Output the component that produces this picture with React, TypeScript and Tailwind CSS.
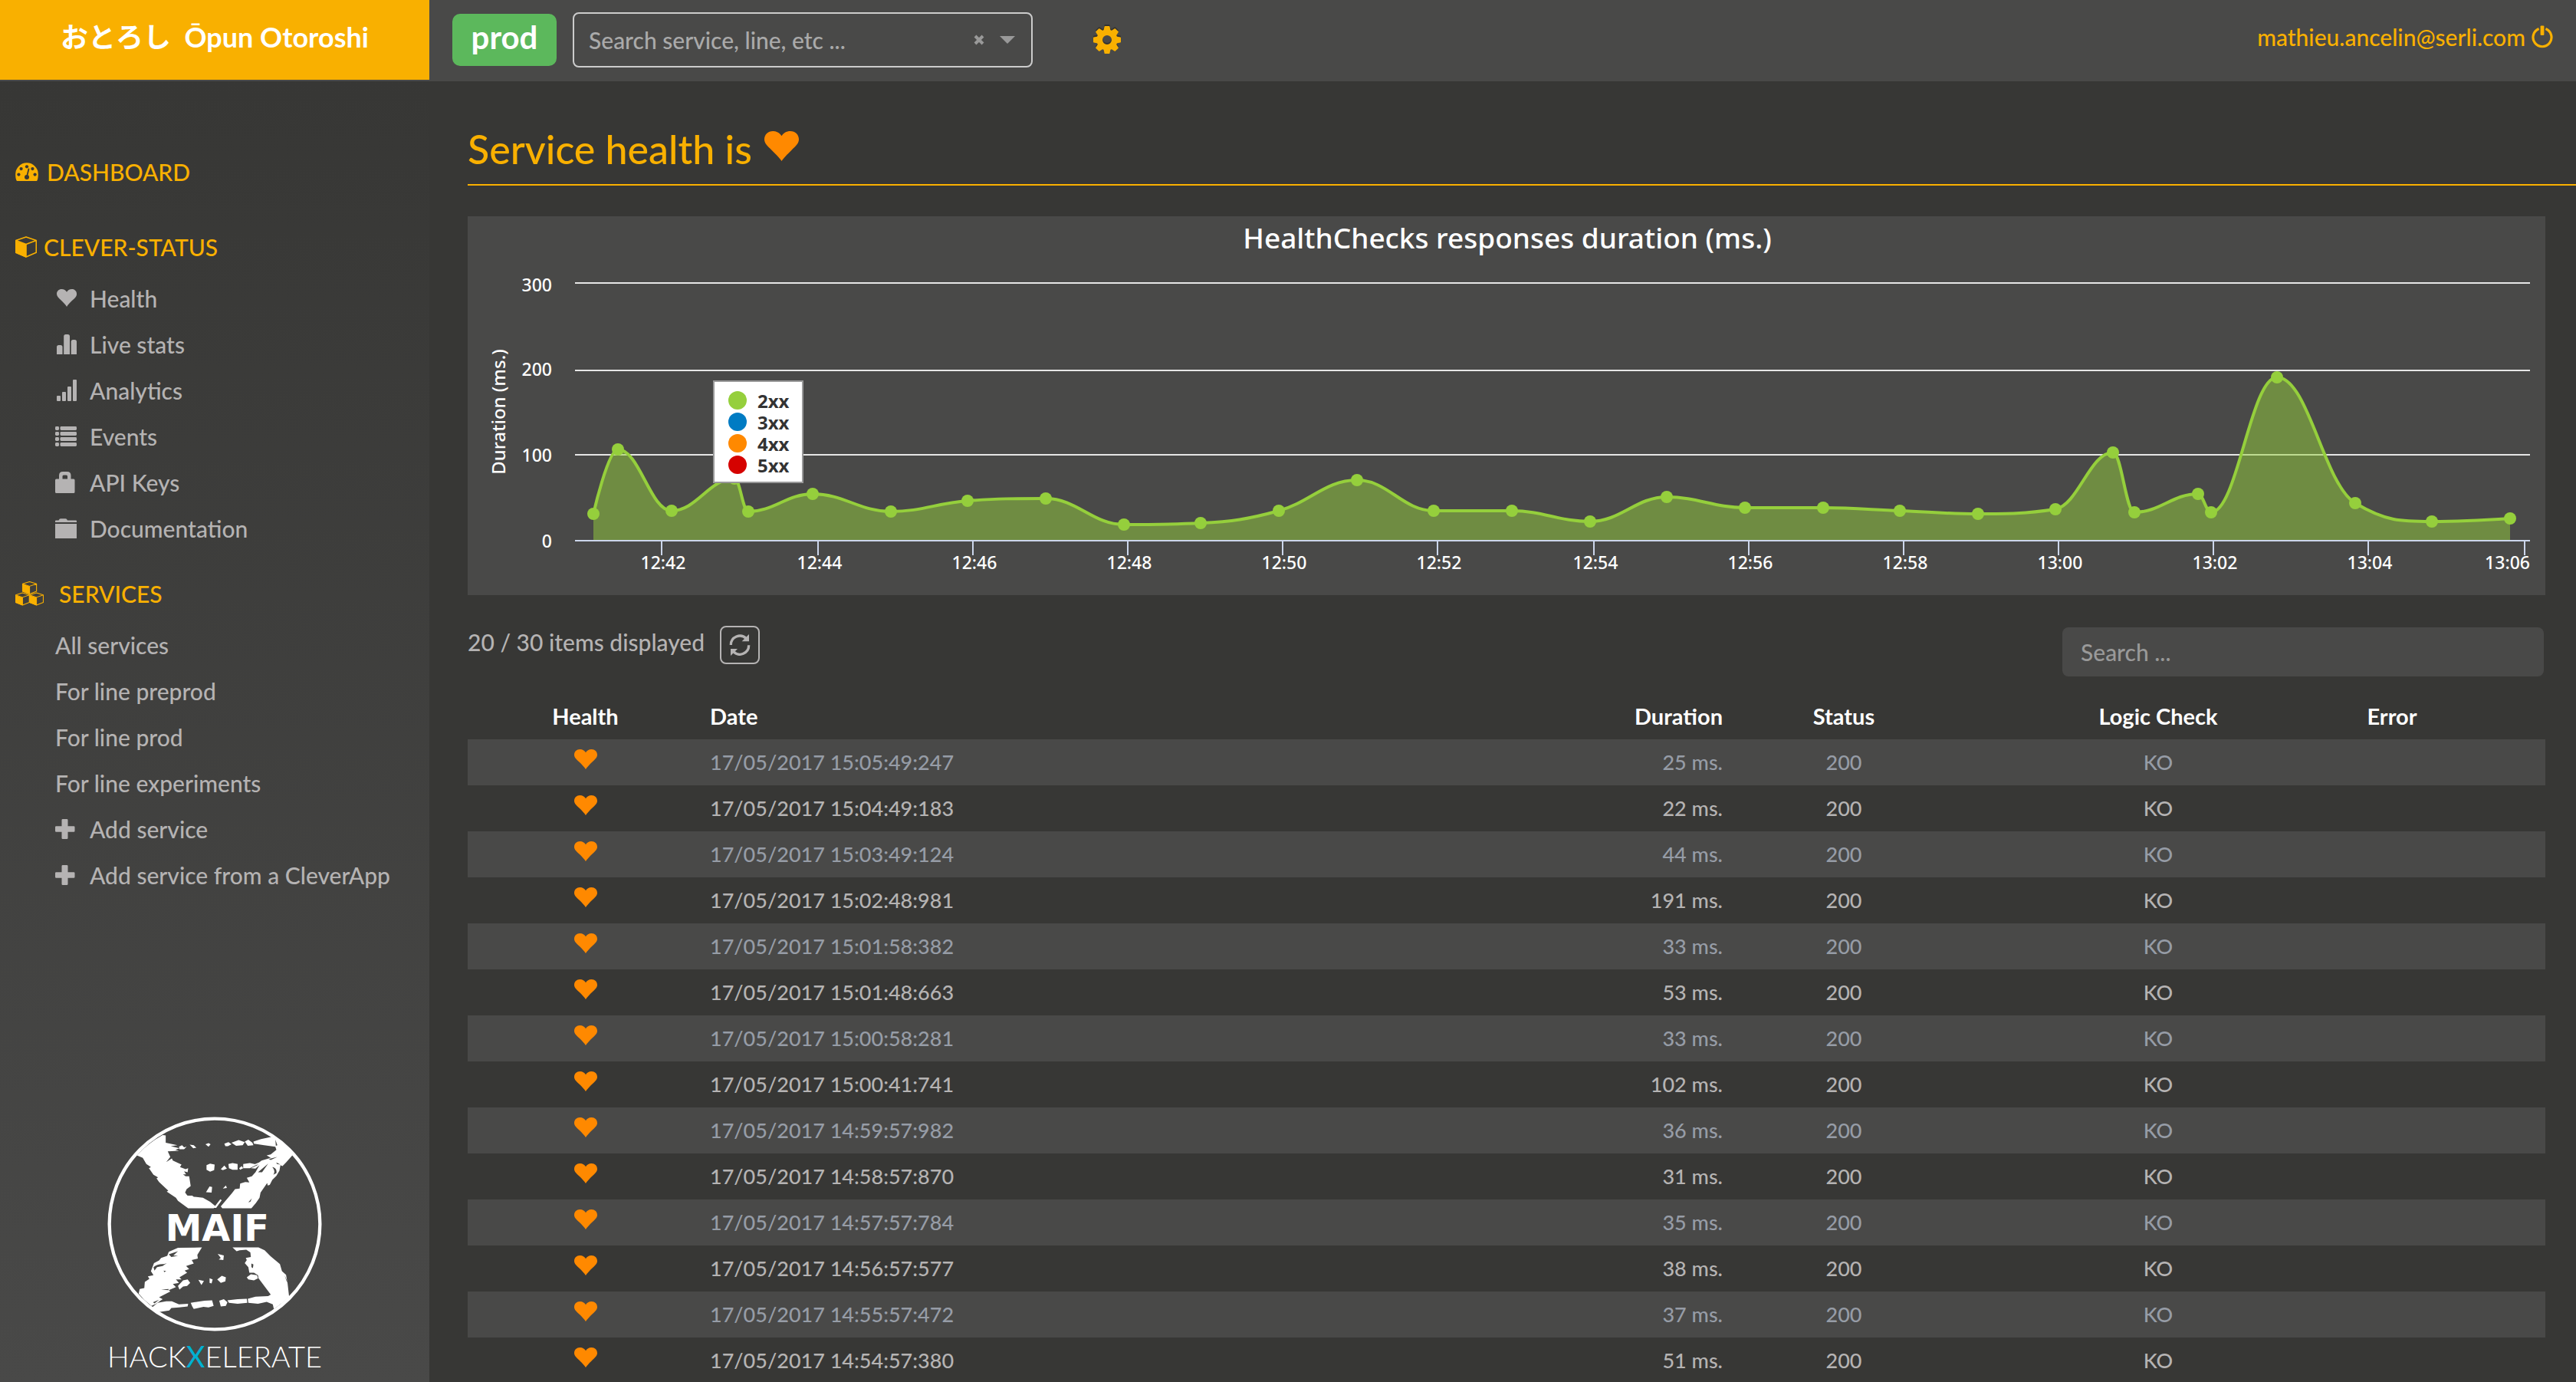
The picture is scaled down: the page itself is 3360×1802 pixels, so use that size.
import type { ReactNode } from "react";

const HEART =
  "M15 26C13.6 23.8 10 20 6.5 16.6C2.5 12.8 0 10.5 0 7.2C0 3 3.2 0 7.4 0C11 0 13.5 1.8 15 4.2C16.5 1.8 19 0 22.6 0C26.8 0 30 3 30 7.2C30 10.5 27.5 12.8 23.5 16.6C20 20 16.4 23.8 15 26Z";

function Heart({ className }: { className: string }) {
  return (
    <svg viewBox="0 0 30 26" className={className} fill="currentColor" aria-hidden="true">
      <path d={HEART} />
    </svg>
  );
}

function Glyph({ children }: { children: ReactNode }) {
  return (
    <svg viewBox="0 0 28 28" className="size-7 shrink-0" fill="currentColor" aria-hidden="true">
      {children}
    </svg>
  );
}

const healthGlyph = (
  <Glyph>
    <path transform="translate(2 2) scale(0.87 0.88)" d={HEART} />
  </Glyph>
);
const statsGlyph = (
  <Glyph>
    <path d="M2 27V17.5Q2 15 4.5 15H7Q9.5 15 9.5 17.5V27ZM11.2 27V3.5Q11.2 1 13.7 1H16.5Q19 1 19 3.5V27ZM20.7 27V10.5Q20.7 8 23.2 8H25.5Q28 8 28 10.5V27Z" />
  </Glyph>
);
const signalGlyph = (
  <Glyph>
    <rect x="2" y="21" width="5" height="7" rx="1" />
    <rect x="9" y="16" width="5" height="12" rx="1" />
    <rect x="16" y="9" width="5" height="19" rx="1" />
    <rect x="23" y="0" width="5" height="28" rx="1" />
  </Glyph>
);
const listGlyph = (
  <Glyph>
    {[1, 8, 15, 22].map((y) => (
      <g key={y}>
        <rect x="0" y={y} width="5" height="5" rx="1.4" />
        <rect x="6.5" y={y} width="21.5" height="5" rx="1.4" />
      </g>
    ))}
  </Glyph>
);
const lockGlyph = (
  <Glyph>
    <path
      fillRule="evenodd"
      d="M1.5 9.5H5V5Q5 0 10 0H15.5Q20.5 0 20.5 5V9.5H24Q25.5 9.5 25.5 11V26.5Q25.5 28 24 28H1.5Q0 28 0 26.5V11Q0 9.5 1.5 9.5ZM9.5 9.5H16V6Q16 4.5 14.5 4.5H11Q9.5 4.5 9.5 6Z"
    />
  </Glyph>
);
const folderGlyph = (
  <Glyph>
    <path d="M0 6V4.2Q0 3.5 1 3.5H4.5Q5.5 1.2 7 1.2H13.5Q15 1.2 16 3.5H27Q28 3.5 28 4.2V6ZM0 8H28V27H0Z" />
  </Glyph>
);
const plusGlyph = (
  <Glyph>
    <path d="M9.8 1H15.2Q16.5 1 16.5 2.3V10.3H24.2Q25.5 10.3 25.5 11.6V16.4Q25.5 17.7 24.2 17.7H16.5V25.7Q16.5 27 15.2 27H9.8Q8.5 27 8.5 25.7V17.7H1.3Q0 17.7 0 16.4V11.6Q0 10.3 1.3 10.3H8.5V2.3Q8.5 1 9.8 1Z" />
  </Glyph>
);

function DashboardIcon() {
  return (
    <svg viewBox="56 95 84 68" className="h-6 w-[30px]" aria-hidden="true">
      <path fill="currentColor" d="M61 163C57 156 56 148 56 138A42 42 0 0 1 140 138C140 148 139 156 135 163Z" />
      <g className="fill-[#383836] stroke-[#383836]" strokeWidth="0">
        <circle cx="68" cy="139" r="6" />
        <circle cx="77" cy="118" r="6" />
        <circle cx="98" cy="110" r="6" />
        <circle cx="119" cy="118" r="6" />
        <circle cx="128" cy="139" r="6" />
        <circle cx="98" cy="149" r="8.5" />
        <path d="M98 147L105 119" strokeWidth="5" strokeLinecap="round" />
      </g>
    </svg>
  );
}

function CubeShape() {
  return (
    <>
      <path d="M39 2L76 15V59L39 75L2 59V15Z M2 15L39 29L76 15" fill="none" stroke="currentColor" strokeWidth="4.5" strokeLinejoin="round" />
      <path d="M0 16L39 29V77L0 60Z" fill="currentColor" />
      <path d="M39 29V75" stroke="currentColor" strokeWidth="4.5" />
    </>
  );
}

function CubeIcon() {
  return (
    <svg viewBox="0 0 78 77" className="size-7" aria-hidden="true">
      <CubeShape />
    </svg>
  );
}

function CubesIcon() {
  return (
    <svg viewBox="0 0 37 32" className="h-8 w-[37px]" aria-hidden="true">
      <g transform="translate(9 0) scale(0.245 0.22)">
        <CubeShape />
      </g>
      <g transform="translate(0 14.5) scale(0.24 0.22)">
        <CubeShape />
      </g>
      <g transform="translate(18.2 14.5) scale(0.24 0.22)">
        <CubeShape />
      </g>
    </svg>
  );
}

function CogIcon() {
  return (
    <svg viewBox="-18 -18 36 36" className="size-9 drop-shadow-[0_-2px_0_#333331]" aria-hidden="true">
      <circle r="9.8" fill="none" stroke="currentColor" strokeWidth="7.6" />
      {[0, 45, 90, 135, 180, 225, 270, 315].map((angle) => (
        <path key={angle} transform={`rotate(${angle})`} d="M-4.6 -12L-3.4 -17.4Q-3.2 -18 -2.6 -18H2.6Q3.2 -18 3.4 -17.4L4.6 -12Z" fill="currentColor" />
      ))}
    </svg>
  );
}

function PowerIcon() {
  return (
    <svg viewBox="0 0 28 30" className="h-[30px] w-7" aria-hidden="true">
      <path d="M9.6 4.6A12 12 0 1 0 18.4 4.6" fill="none" stroke="currentColor" strokeWidth="3.2" />
      <rect x="11.6" y="0.5" width="4.8" height="12.5" rx="1" fill="currentColor" />
    </svg>
  );
}

function RefreshIcon() {
  return (
    <svg viewBox="156 113 84 84" className="size-7" aria-hidden="true">
      <path d="M163 155A35 35 0 0 1 223 130M233 156A35 35 0 0 1 173 181" fill="none" stroke="currentColor" strokeWidth="10" />
      <path d="M234 113V141H206ZM162 197V170H189Z" fill="currentColor" />
    </svg>
  );
}

function MaifLogo() {
  return (
    <svg viewBox="60 78 840 842" className="size-[280px]" role="img" aria-label="MAIF">
      <circle cx="480" cy="499" r="413" fill="none" stroke="#fff" strokeWidth="13" />
      <g fill="#fff">
        <path d="M175 230Q218 182 276 150L288 152L288 180L334 190L308 194L342 202L326 208L340 212L296 214L306 236L290 256L312 242L316 250L350 266L344 276L366 284L376 280L374 296L360 292L368 304L356 304L366 312L380 312L386 350L370 362L364 376L374 388L392 388L398 392L434 396L462 412L484 430L476 437H376L336 408L328 396L292 372L298 368L262 334L252 320L258 316L240 306L222 280L230 276L212 264L198 240Z" />
        <path d="M510 437L504 430L548 378L560 362L578 360L580 340L600 334L616 336L606 318L626 312L640 296L656 268L640 282L622 280L652 266L628 268L654 258L664 250L700 240L684 230L700 226L722 208L718 196L674 190L634 184L632 176L662 166L708 156L734 170L786 228L760 258L746 272L738 268L734 290L722 310L706 326L696 346L688 348L686 338L660 376L656 396L642 416L624 437Z" />
        <path d="M476 436L502 402L508 406L486 436Z" />
        <path d="M340 196L352 190L360 198L370 196L360 206L342 206ZM382 188L398 190L408 200L396 202ZM444 186L456 182L464 186L456 196ZM518 184L534 178L546 186L532 194L522 194ZM546 180L574 170L598 178L590 190L564 192ZM598 176L612 168L628 180L632 190L610 192Z" />
        <path d="M448 268L462 262L480 266L478 288L462 294L448 286ZM504 284L518 270L528 282L512 288ZM534 264L550 260L570 264L570 286L550 286L536 280ZM592 264L618 260L646 266L618 280L592 280ZM576 280L586 272L592 280L580 286ZM446 374L460 352L470 354L468 376ZM512 360L524 348L528 358Z" />
        <path d="M336 592L430 591L412 620L414 634L390 640L398 654L368 664L380 676L362 682L372 690L342 708L350 716L328 716L340 730L316 734L328 746L300 758L306 764L262 786L276 794L250 812L232 820Q204 800 182 772L186 754L204 750L206 726L224 714L218 704L240 700L230 684L242 652L262 642L270 632L294 624L300 608Z" />
        <path d="M550 591H652L676 602L700 626L736 656L744 684L760 698L766 732L772 784Q748 808 712 832L708 814L684 804L650 812L612 808L610 792L640 784L690 782L700 776L652 712L650 700L634 690L616 690L612 668L598 652L606 640L602 632L622 628L620 610L604 600L578 602L566 606Z" />
        <path d="M492 616L516 622L514 640L496 638L504 632ZM606 708L622 696L646 700L650 712L634 720L612 716ZM490 716L508 702L524 708L522 724L504 730ZM416 718L438 722L428 738ZM460 712L472 716L468 732L460 730ZM336 742L356 720L374 716L384 730L372 742L356 744L342 756Z" />
        <path d="M232 828L256 808L290 802L312 802L340 814L376 812L374 822L340 826L310 828L302 838L262 844ZM250 836L262 822L256 838ZM386 808L410 804L440 800L470 798L476 820L456 826L436 824L398 832L392 822ZM498 800L516 794L530 806L524 820L504 822ZM530 798L570 794L606 792L608 808L570 812L536 808Z" />
      </g>
      <g className="fill-[#484846]">
        <path d="M366 376L374 386L390 390L372 386ZM490 432L510 404L514 410L496 436ZM706 276Q726 280 722 300L710 306Q720 292 706 276ZM650 296L690 262L666 296ZM612 414L626 398L620 412ZM718 168L726 190L720 192ZM692 244L726 236L700 248ZM722 258L738 266L724 264Z" />
        <path d="M240 668Q256 654 282 656L292 652L276 664L254 668L244 682ZM300 618L336 606L318 622L336 624L310 628ZM624 654L632 658L630 672L624 668ZM280 682L290 684L282 688ZM238 806L262 796L244 810ZM270 756L300 754L298 758ZM754 700L768 730L762 722Z" />
      </g>
      <text x="490" y="564" textAnchor="middle" fill="#fff" className="font-['DejaVu_Sans'] text-[144px] font-bold">
        MAIF
      </text>
    </svg>
  );
}

type Item = { label: string; icon?: ReactNode };

const SERVICE_ITEMS: Item[] = [
  { label: "Health", icon: healthGlyph },
  { label: "Live stats", icon: statsGlyph },
  { label: "Analytics", icon: signalGlyph },
  { label: "Events", icon: listGlyph },
  { label: "API Keys", icon: lockGlyph },
  { label: "Documentation", icon: folderGlyph },
];

const SERVICES_ITEMS: Item[] = [
  { label: "All services" },
  { label: "For line preprod" },
  { label: "For line prod" },
  { label: "For line experiments" },
  { label: "Add service", icon: plusGlyph },
  { label: "Add service from a CleverApp", icon: plusGlyph },
];

function NavList({ items }: { items: Item[] }) {
  return (
    <ul className="mt-[7px] pl-[72px] text-[30px] leading-[60px] text-[#b5b3b3]">
      {items.map((item) => (
        <li key={item.label}>
          <a href="#" className="flex items-center gap-[17px] whitespace-nowrap">
            {item.icon}
            {item.label}
          </a>
        </li>
      ))}
    </ul>
  );
}

function Sidebar() {
  return (
    <aside className="flex w-[560px] shrink-0 flex-col bg-linear-to-b from-[#373735] to-[#494948] pt-[88px]">
      <nav>
        <h2 className="pl-5 text-[30px] leading-[60px] text-[#f9b000]">
          <a href="#" className="flex items-center gap-[11px]">
            <DashboardIcon />
            DASHBOARD
          </a>
        </h2>
        <h2 className="mt-[38px] flex items-center gap-[9px] pl-5 text-[30px] leading-[60px] text-[#f9b000]">
          <CubeIcon />
          CLEVER-STATUS
        </h2>
        <NavList items={SERVICE_ITEMS} />
        <h2 className="mt-[25px] flex items-center gap-5 pl-5 text-[30px] leading-[60px] text-[#f9b000]">
          <CubesIcon />
          SERVICES
        </h2>
        <NavList items={SERVICES_ITEMS} />
      </nav>
      <div className="mt-auto flex flex-col items-center gap-2 pb-[10px]">
        <MaifLogo />
        <p className="text-[38px] leading-[48px] font-light text-white">
          HACK<span className="font-normal text-[#00b1d2]">X</span>ELERATE
        </p>
      </div>
    </aside>
  );
}

function Header() {
  return (
    <header className="flex h-[106px] shrink-0 bg-[#494948]">
      <a
        href="#"
        className="flex h-[104px] w-[560px] shrink-0 items-center justify-center bg-[#f9b000] pb-2 font-[Lato,'Noto_Sans_CJK_JP',sans-serif] text-[36px] font-bold whitespace-pre text-white"
      >
        {"おとろし  Ōpun Otoroshi"}
      </a>
      <div className="flex h-[104px] flex-1 items-center pr-[30px] pl-[30px]">
        <span className="flex h-[68px] w-[136px] items-center justify-center rounded-[10px] bg-[#5cb85c] pb-2 text-[42px] font-bold text-white">
          prod
        </span>
        <div className="ml-[21px] flex h-[72px] w-[600px] items-center rounded-lg border-2 border-[#ccc] pr-[21px] pl-[19px]">
          <input
            type="text"
            role="combobox"
            aria-expanded="false"
            aria-controls="service-options"
            aria-label="Search service"
            placeholder="Search service, line, etc ..."
            className="min-w-0 flex-1 bg-transparent text-[30px] text-white outline-none placeholder:text-[#aaa]"
          />
          <button type="button" aria-label="Clear" className="text-[#999]">
            <svg viewBox="0 0 14 14" className="size-[14px]" aria-hidden="true">
              <path d="M2 2L12 12M12 2L2 12" stroke="currentColor" strokeWidth="4" />
            </svg>
          </button>
          <button type="button" aria-label="Open the list" className="ml-5 text-[#999]">
            <svg viewBox="0 0 20 10" className="h-[10px] w-5" fill="currentColor" aria-hidden="true">
              <path d="M0 0H20L10 10Z" />
            </svg>
          </button>
        </div>
        <button type="button" aria-label="Settings" className="ml-[79px] text-[#f9b000]">
          <CogIcon />
        </button>
        <a href="#" className="ml-auto flex items-center gap-2 pb-2 text-[30px] text-[#f9b000]">
          mathieu.ancelin@serli.com
          <PowerIcon />
        </a>
      </div>
    </header>
  );
}

const POINTS: [number, number][] = [
  [164, 388], [196, 304], [266, 384], [348, 342], [366, 385], [450, 362], [552, 385], [652, 371],
  [754, 368], [856, 402], [956, 400], [1058, 384], [1160, 344], [1260, 384], [1362, 384], [1464, 398],
  [1564, 366], [1666, 380], [1768, 380], [1868, 384], [1970, 388], [2071, 382], [2146, 308], [2174, 386],
  [2257, 362], [2274, 386], [2360, 210], [2462, 374], [2562, 398], [2664, 394],
];

// Smoothed line through the points that never overshoots a neighbour's height.
function splinePath(points: [number, number][]): string {
  let d = `M${points[0][0]} ${points[0][1]}`;
  let rightX = points[0][0];
  let rightY = points[0][1];
  for (let i = 1; i < points.length; i++) {
    const [x, y] = points[i];
    let leftX = x;
    let leftY = y;
    let nextRightX = x;
    let nextRightY = y;
    if (i < points.length - 1) {
      const [lastX, lastY] = points[i - 1];
      const [nextX, nextY] = points[i + 1];
      leftX = (1.5 * x + lastX) / 2.5;
      leftY = (1.5 * y + lastY) / 2.5;
      nextRightX = (1.5 * x + nextX) / 2.5;
      nextRightY = (1.5 * y + nextY) / 2.5;
      const correction = ((nextRightY - leftY) * (nextRightX - x)) / (nextRightX - leftX) + y - nextRightY;
      leftY += correction;
      nextRightY += correction;
      if (leftY > lastY && leftY > y) {
        leftY = Math.max(lastY, y);
        nextRightY = 2 * y - leftY;
      } else if (leftY < lastY && leftY < y) {
        leftY = Math.min(lastY, y);
        nextRightY = 2 * y - leftY;
      }
      if (nextRightY > nextY && nextRightY > y) {
        nextRightY = Math.max(nextY, y);
        leftY = 2 * y - nextRightY;
      } else if (nextRightY < nextY && nextRightY < y) {
        nextRightY = Math.min(nextY, y);
        leftY = 2 * y - nextRightY;
      }
    }
    d += `C${rightX} ${rightY} ${leftX} ${leftY} ${x} ${y}`;
    rightX = nextRightX;
    rightY = nextRightY;
  }
  return d;
}

const LINE = splinePath(POINTS);
const TIMES: [string, number][] = [
  ["12:42", 253], ["12:44", 457], ["12:46", 659], ["12:48", 861], ["12:50", 1063], ["12:52", 1265],
  ["12:54", 1469], ["12:56", 1671], ["12:58", 1873], ["13:00", 2075], ["13:02", 2277], ["13:04", 2479], ["13:06", 2683],
];
const LEVELS: [string, number, number][] = [["300", 87, 98], ["200", 201, 208], ["100", 311, 320], ["0", 423, 432]];
const LEGEND = [
  { label: "2xx", dot: "fill-[#95cf3c]" },
  { label: "3xx", dot: "fill-[#007bc3]" },
  { label: "4xx", dot: "fill-[#ff8900]" },
  { label: "5xx", dot: "fill-[#d50200]" },
];

function DurationChart() {
  return (
    <svg
      viewBox="0 0 2710 494"
      className="mt-10 block h-auto w-full bg-[#494948] font-['Noto_Sans',sans-serif]"
      role="img"
      aria-label="HealthChecks responses duration"
    >
      <text x="1356" y="42" textAnchor="middle" fill="#fff" className="text-[37px]">
        HealthChecks responses duration (ms.)
      </text>
      {LEVELS.map(([label, y, baseline]) => (
        <g key={label}>
          <text x="110" y={baseline} textAnchor="end" fill="#fff" className="text-[23px]">
            {label}
          </text>
          {label !== "0" && <path d={`M140 ${y}H2690`} className="stroke-[#e6e6e6]" strokeWidth="2" />}
        </g>
      ))}
      <text transform="translate(49 255) rotate(-90)" textAnchor="middle" fill="#fff" className="text-[24px]">
        Duration (ms.)
      </text>
      <path d={`${LINE}L2664 423H164Z`} className="fill-[#95cf3c]/50" />
      <path d="M140 423H2690" className="stroke-[#ccd6eb]" strokeWidth="2" />
      {TIMES.map(([label, x], i) => (
        <g key={label}>
          <path d={`M${x} 423V442`} className="stroke-[#ccd6eb]" strokeWidth="2" />
          <text x={i === TIMES.length - 1 ? 2690 : x + 2} y="460" textAnchor={i === TIMES.length - 1 ? "end" : "middle"} fill="#fff" className="text-[23px]">
            {label}
          </text>
        </g>
      ))}
      <path d={LINE} fill="none" className="stroke-[#95cf3c]" strokeWidth="4" strokeLinejoin="round" />
      {POINTS.map(([x, y]) => (
        <circle key={x} cx={x} cy={y} r="8" className="fill-[#95cf3c]" />
      ))}
      <rect x="321" y="215" width="116" height="132" fill="#fff" className="stroke-[#999]" strokeWidth="2" />
      {LEGEND.map(({ label, dot }, i) => (
        <g key={label}>
          <circle cx="352" cy={240 + i * 28} r="12" className={dot} />
          <text x="378" y={250 + i * 28} className="fill-[#333] text-[24px] font-bold">
            {label}
          </text>
        </g>
      ))}
    </svg>
  );
}

const ROWS: [string, number][] = [
  ["17/05/2017 15:05:49:247", 25],
  ["17/05/2017 15:04:49:183", 22],
  ["17/05/2017 15:03:49:124", 44],
  ["17/05/2017 15:02:48:981", 191],
  ["17/05/2017 15:01:58:382", 33],
  ["17/05/2017 15:01:48:663", 53],
  ["17/05/2017 15:00:58:281", 33],
  ["17/05/2017 15:00:41:741", 102],
  ["17/05/2017 14:59:57:982", 36],
  ["17/05/2017 14:58:57:870", 31],
  ["17/05/2017 14:57:57:784", 35],
  ["17/05/2017 14:56:57:577", 38],
  ["17/05/2017 14:55:57:472", 37],
  ["17/05/2017 14:54:57:380", 51],
];

function ChecksTable() {
  return (
    <table className="w-full table-fixed text-[27px] leading-[60px] text-[#b5b3b3]">
      <thead className="text-[29px] text-white">
        <tr>
          <th className="w-[307px] font-bold">Health</th>
          <th className="px-[9px] text-left font-bold">Date</th>
          <th className="w-[240px] px-[10px] text-right font-bold">Duration</th>
          <th className="w-[296px] font-bold">Status</th>
          <th className="w-[524px] font-bold">Logic Check</th>
          <th className="w-[86px] font-bold">Error</th>
          <th className="w-[157px]" aria-hidden="true"></th>
        </tr>
      </thead>
      <tbody>
        {ROWS.map(([date, duration]) => (
          <tr key={date} className="h-[60px] odd:bg-[#494948] odd:text-[#969ca6]">
            <td>
              <Heart className="mx-auto mb-2 h-[26px] w-[30px] text-[#ff8900]" />
            </td>
            <td className="px-[9px]">{date}</td>
            <td className="px-[10px] text-right">{duration} ms.</td>
            <td className="text-center">200</td>
            <td className="text-center">KO</td>
            <td></td>
            <td></td>
          </tr>
        ))}
      </tbody>
    </table>
  );
}

export default function App() {
  return (
    <div className="flex h-screen flex-col overflow-hidden bg-[#373735] font-[Lato,sans-serif] font-medium">
      <Header />
      <div className="flex min-h-0 flex-1">
        <Sidebar />
        <main className="min-w-0 flex-1 overflow-y-auto pt-[42px] pl-[50px] [scrollbar-width:none]">
          <h1 className="flex items-center gap-4 border-b-2 border-[#f9b000] text-[52px] leading-[92px] text-[#f9b000]">
            Service health is
            <Heart className="mb-2 h-[39px] w-[45px] text-[#ff8900]" />
          </h1>
          <div className="pr-10">
            <DurationChart />
            <div className="mt-10 mb-[22px] flex items-start text-[30px] text-[#b5b3b3]">
              <p className="leading-[42px]">20 / 30 items displayed</p>
              <button
                type="button"
                aria-label="Refresh"
                className="ml-5 flex h-[50px] w-[52px] items-center justify-center rounded-lg border-2 border-[#b5b3b3]"
              >
                <RefreshIcon />
              </button>
              <input
                type="search"
                aria-label="Search the checks"
                placeholder="Search ..."
                className="mt-[2px] mr-[2px] ml-auto h-16 w-[628px] rounded-lg bg-[#494948] px-6 text-white outline-none placeholder:text-[#999]"
              />
            </div>
            <ChecksTable />
          </div>
        </main>
      </div>
    </div>
  );
}
